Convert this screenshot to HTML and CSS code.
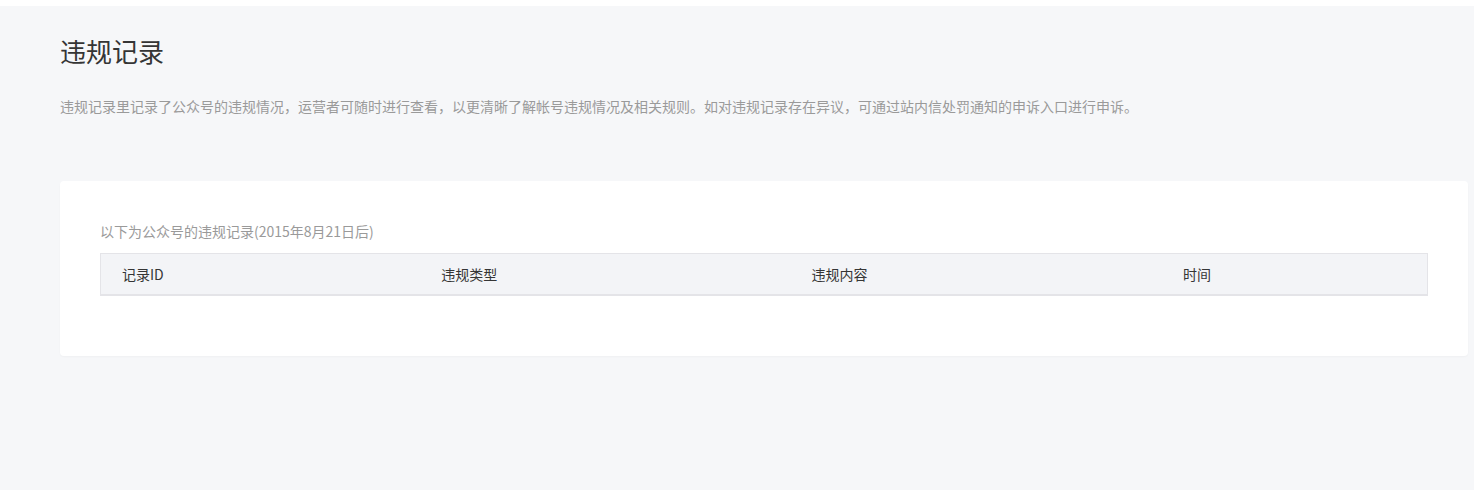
FILE: index.html
```html
<!DOCTYPE html>
<html lang="zh-CN">
<head>
    <meta charset="UTF-8">
    <title>违规记录</title>
    <link rel="stylesheet" href="styles.css">
</head>
<body>
    <div class="main">
        <h2 class="page-title">违规记录</h2>
        <p class="page-desc">违规记录里记录了公众号的违规情况，运营者可随时进行查看，以更清晰了解帐号违规情况及相关规则。如对违规记录存在异议，可通过站内信处罚通知的申诉入口进行申诉。</p>
        <div class="card">
            <p class="card-tips">以下为公众号的违规记录(2015年8月21日后)</p>
            <table class="record-table">
                <thead>
                    <tr>
                        <th class="col-id">记录ID</th>
                        <th class="col-type">违规类型</th>
                        <th class="col-content">违规内容</th>
                        <th class="col-time">时间</th>
                    </tr>
                </thead>
                <tbody></tbody>
            </table>
        </div>
    </div>
</body>
</html>
```

FILE: styles.css
```css
* {
    margin: 0;
    padding: 0;
    box-sizing: border-box;
}

html, body {
    height: 100%;
}

body {
    background: #fff;
    font-family: "Noto Sans CJK SC", "Liberation Sans", sans-serif;
    font-size: 14px;
    color: #353535;
    padding: 6px 1px 0 0;
}

.main {
    height: 484px;
    background: #f6f7f9;
    padding: 25px 6px 0 60px;
}

.page-title {
    font-size: 26px;
    font-weight: normal;
    line-height: 40px;
    color: #353535;
}

.page-desc {
    margin-top: 24px;
    font-size: 14px;
    line-height: 22px;
    color: #9a9a9a;
}

.card {
    margin-top: 64px;
    background: #fff;
    border-radius: 4px;
    box-shadow: 0 1px 2px rgba(0, 0, 0, 0.03);
    padding: 38px 40px 60px;
}

.card-tips {
    color: #9a9a9a;
    line-height: 24px;
    margin-bottom: 10px;
}

.record-table {
    width: 100%;
    border-collapse: collapse;
    table-layout: fixed;
}

.record-table th {
    background: #f3f4f7;
    border-top: 1px solid #e4e4e8;
    border-bottom: 2px solid #e4e4e8;
    font-weight: normal;
    text-align: left;
    color: #353535;
    height: 41px;
    padding: 0 0 0 21px;
}

.record-table th:first-child {
    border-left: 1px solid #e4e4e8;
}

.record-table th:last-child {
    border-right: 1px solid #e4e4e8;
}

.col-id { width: 24.1%; }
.col-type { width: 27.9%; }
.col-content { width: 28%; }
.col-time { width: 20%; }
```
